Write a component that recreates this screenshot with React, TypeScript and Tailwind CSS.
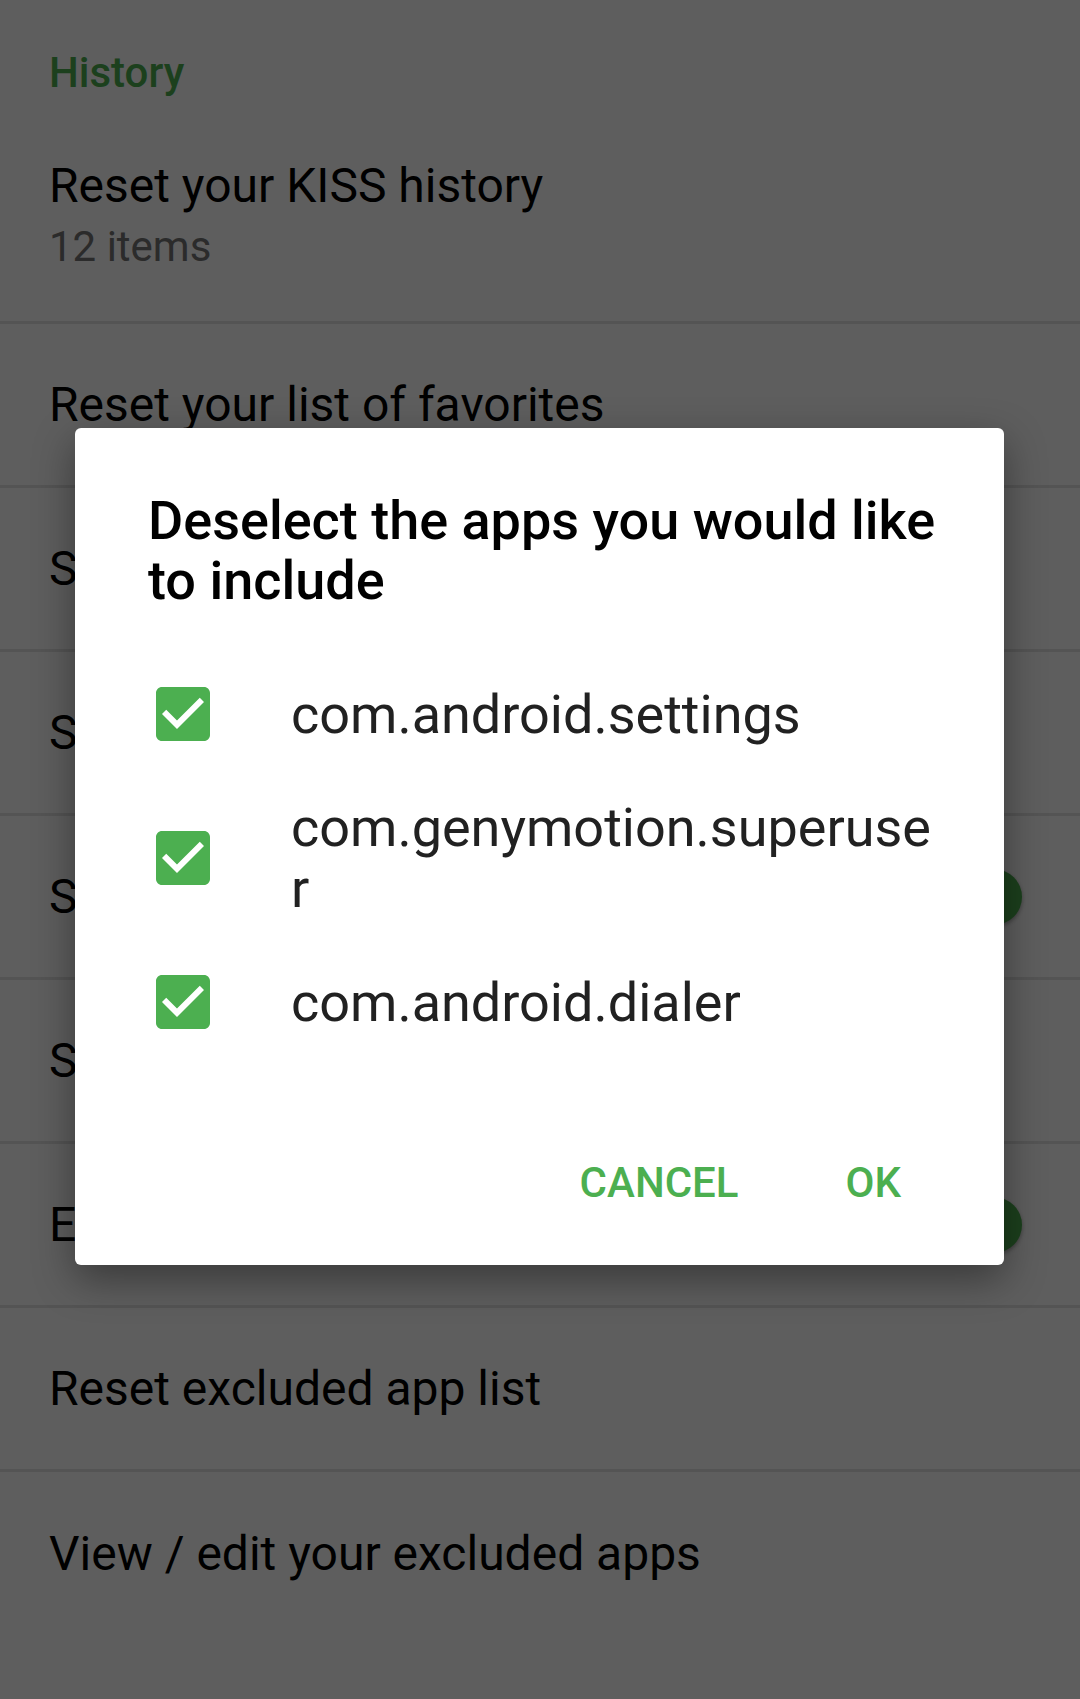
const excluded = ['com.android.settings', 'com.genymotion.superuser', 'com.android.dialer'];

// rows under the dim overlay, only the first letters peek out left of the dialog
const prefs: { title: string; toggle?: boolean }[] = [
  { title: 'Reset your list of favorites' },
  { title: 'Sort apps alphabetically' },
  { title: 'Show history on start' },
  { title: 'Show favorites above search bar', toggle: true },
  { title: 'Select history mode' },
  { title: 'Exclude favorites from history', toggle: true },
  { title: 'Reset excluded app list' },
  { title: 'View / edit your excluded apps' },
];

function Category({ label, top = 'pt-[48px]' }: { label: string; top?: string }) {
  return <div className={top + ' px-[49px] text-[42px] font-medium leading-[50px] text-[#4caf50]'}>{label}</div>;
}

function Switch() {
  return (
    <div className="relative h-[56px] w-[104px] shrink-0">
      <div className="absolute left-[6px] right-[6px] top-[13px] h-[30px] rounded-full bg-[#a5d6a7]" />
      <div className="absolute right-0 top-0 h-[56px] w-[56px] rounded-full bg-[#4caf50] shadow-[0_2px_4px_rgba(0,0,0,0.35)]" />
    </div>
  );
}

function CheckBox() {
  return (
    <svg width={54} height={54} viewBox="3 3 18 18" className="shrink-0">
      <path
        fill="#4caf50"
        d="M19 3H5c-1.11 0-2 .9-2 2v14c0 1.1.89 2 2 2h14c1.11 0 2-.9 2-2V5c0-1.1-.89-2-2-2zm-9 14l-5-5 1.41-1.41L10 14.17l7.59-7.59L19 8l-9 9z"
      />
    </svg>
  );
}

export default function App() {
  return (
    <div className="relative h-[1699px] w-[1080px] overflow-hidden bg-white font-[Roboto,sans-serif] text-black">
      {/* settings screen */}
      <Category label="History" />
      <div className="border-b-[3px] border-[#e3e3e3] px-[49px] pb-[49px] pt-[60px]">
        <div className="text-[48px] leading-[56px]">Reset your KISS history</div>
        <div className="mt-[8px] text-[42px] leading-[50px] text-[#757575]">12 items</div>
      </div>
      {prefs.map((p, i) => (
        <div
          key={p.title}
          className={
            'flex h-[164px] items-center justify-between pl-[49px] pr-[58px] ' +
            (i < prefs.length - 1 ? 'border-b-[3px] border-[#e3e3e3]' : '')
          }
        >
          <span className="text-[48px] leading-[56px]">{p.title}</span>
          {p.toggle && <Switch />}
        </div>
      ))}
      <Category label="Advanced" top="pt-[62px]" />

      {/* dim */}
      <div className="absolute inset-0 bg-black/[0.63]" />

      {/* dialog */}
      <div className="absolute left-[75px] top-[428px] w-[929px] rounded-[6px] bg-white shadow-[0_14px_40px_rgba(0,0,0,0.4)]">
        <h2 className="pl-[73px] pr-[30px] pt-[63px] text-[54px] font-medium leading-[60px] text-black">
          Deselect the apps you would like to include
        </h2>
        <div className="mt-[31px]">
          {excluded.map((name) => (
            <div key={name} className="flex h-[144px] items-center pl-[81px]">
              <CheckBox />
              <span className="ml-[81px] w-[641px] break-all text-[54px] leading-[61px] text-[#212121]">{name}</span>
            </div>
          ))}
        </div>
        <div className="mt-[27px] flex h-[164px] items-center justify-end gap-[107px] pr-[103px] text-[42px] font-medium leading-none text-[#4caf50]">
          <button>CANCEL</button>
          <button>OK</button>
        </div>
      </div>
    </div>
  );
}
